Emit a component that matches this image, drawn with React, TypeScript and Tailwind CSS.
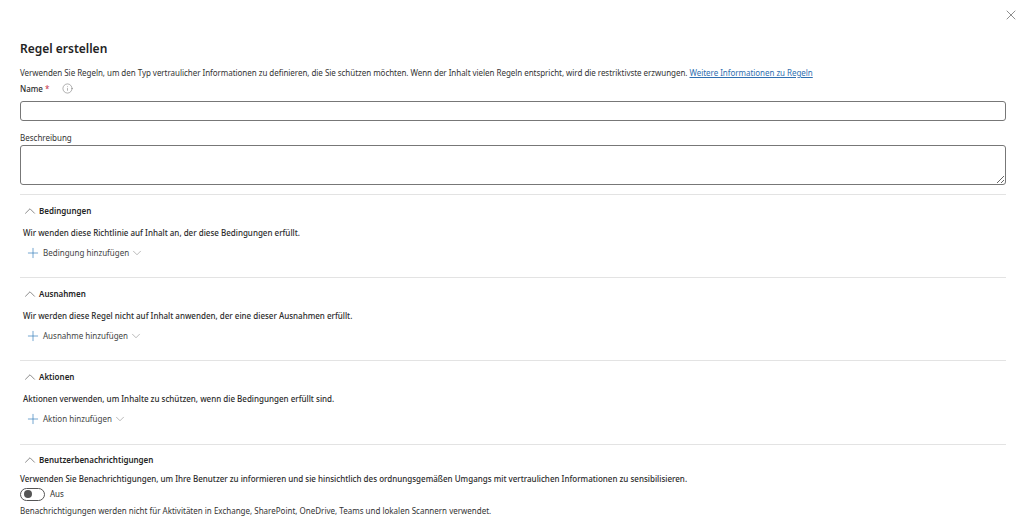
import { ChevronDown, ChevronUp, Info, Plus, X } from "lucide-react";

const font = "font-['Noto_Sans','Open_Sans',sans-serif]";

interface SectionProps {
  title: string;
  text: string;
  action: string;
}

const SectionHead = ({ title }: { title: string }) => (
  <div className="flex items-center h-[14px] pl-[1px]">
    <ChevronUp size={18} strokeWidth={1} className="text-[#666]" />
    <strong className="text-[8px] font-semibold text-[#242424]">{title}</strong>
  </div>
);

const Section = ({ title, text, action }: SectionProps) => (
  <section className="border-t border-[#e3e3e3] pt-[9px] h-[83px]">
    <SectionHead title={title} />
    <p className="mt-[8px] pl-[3px] h-[14px] leading-[14px] text-[8px] font-medium text-[#2b2b2b]">{text}</p>
    <div className="mt-[6px] pl-[5px] flex items-center h-[14px]">
      <Plus size={16} strokeWidth={1} className="text-[#2f7ab8]" />
      <span className="ml-[2px] text-[8px] text-[#444]">{action}</span>
      <ChevronDown size={14} strokeWidth={1} className="ml-[1px] text-[#888]" />
    </div>
  </section>
);

const App = () => {
  return (
    <div className={`${font} relative w-[1024px] h-[524px] overflow-hidden bg-white px-[20px] pt-[41px] text-[8px] text-[#333]`}>
      <button className="absolute top-[7px] right-[5px] text-[#555]">
        <X size={16} strokeWidth={1} />
      </button>

      <div className="w-[986px]">
        <h1 className="h-[16px] leading-[16px] text-[12px] font-semibold text-[#242424]">Regel erstellen</h1>
        <p className="mt-[9px] h-[14px] leading-[14px] tracking-[-0.04px] whitespace-nowrap">
          Verwenden Sie Regeln, um den Typ vertraulicher Informationen zu definieren, die Sie schützen möchten. Wenn der Inhalt vielen Regeln entspricht, wird die restriktivste erzwungen.{" "}
          <a className="text-[#2f6fb0] underline">Weitere Informationen zu Regeln</a>
        </p>
        <div className="mt-[2px] flex items-center h-[14px]">
          <span className="font-medium text-[#2b2b2b]">Name</span>
          <span className="ml-[2px] text-[#c4314b]">*</span>
          <Info size={11} strokeWidth={1} className="ml-[13px] -mt-[1px] text-[#555]" />
        </div>
        <input className="mt-[5px] block w-full h-[20px] rounded-[3px] border border-[#777] bg-white" />
        <label className="block mt-[10px] h-[14px] leading-[14px]">Beschreibung</label>
        <textarea className="block w-full h-[40px] rounded-[3px] border border-[#777] bg-white" />

        <div className="mt-[9px]">
          <Section title="Bedingungen" text="Wir wenden diese Richtlinie auf Inhalt an, der diese Bedingungen erfüllt." action="Bedingung hinzufügen" />
          <Section title="Ausnahmen" text="Wir werden diese Regel nicht auf Inhalt anwenden, der eine dieser Ausnahmen erfüllt." action="Ausnahme hinzufügen" />
          <Section title="Aktionen" text="Aktionen verwenden, um Inhalte zu schützen, wenn die Bedingungen erfüllt sind." action="Aktion hinzufügen" />
          <section className="border-t border-[#e3e3e3] pt-[8px] mt-[1px]">
            <SectionHead title="Benutzerbenachrichtigungen" />
            <p className="mt-[5px] h-[14px] leading-[14px] font-medium text-[#2b2b2b] whitespace-nowrap">
              Verwenden Sie Benachrichtigungen, um Ihre Benutzer zu informieren und sie hinsichtlich des ordnungsgemäßen Umgangs mit vertraulichen Informationen zu sensibilisieren.
            </p>
            <div className="mt-[1px] flex items-center h-[14px]">
              <span className="flex items-center w-[25px] h-[13px] rounded-full border border-[#555] pl-[3px]">
                <span className="w-[8px] h-[8px] rounded-full bg-[#555]" />
              </span>
              <span className="ml-[5px]">Aus</span>
            </div>
            <p className="mt-[3px] h-[14px] leading-[14px] whitespace-nowrap">
              Benachrichtigungen werden nicht für Aktivitäten in Exchange, SharePoint, OneDrive, Teams und lokalen Scannern verwendet.
            </p>
          </section>
        </div>
      </div>
    </div>
  );
};

export default App;
